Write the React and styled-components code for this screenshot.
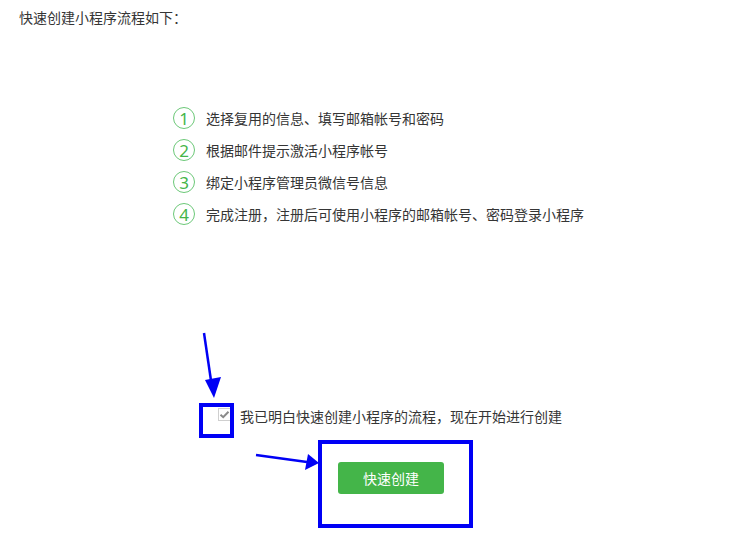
import React, { useState } from "react";
import styled, { createGlobalStyle } from "styled-components";

const steps = [
  "选择复用的信息、填写邮箱帐号和密码",
  "根据邮件提示激活小程序帐号",
  "绑定小程序管理员微信号信息",
  "完成注册，注册后可使用小程序的邮箱帐号、密码登录小程序",
];

const GlobalStyle = createGlobalStyle`
  html, body {
    margin: 0;
    padding: 0;
    background: #fff;
  }
  body {
    font-family: "Microsoft YaHei", "Noto Sans CJK SC", "Noto Sans", sans-serif;
    font-size: 14px;
    color: #353535;
  }
`;

const Page = styled.div`
  position: relative;
  width: 731px;
  height: 558px;
  box-sizing: border-box;
  padding: 7px 19px;
  overflow: hidden;
`;

const Heading = styled.div`
  line-height: 20px;
`;

const StepList = styled.ol`
  list-style: none;
  margin: 80px 0 0;
  padding: 0 0 0 154px;
  display: flex;
  flex-direction: column;
  gap: 10px;
`;

const StepRow = styled.li`
  display: flex;
  align-items: center;
  gap: 11px;
  height: 22px;
`;

const StepNum = styled.span`
  width: 22px;
  height: 22px;
  box-sizing: border-box;
  border: 1px solid #6cc878;
  border-radius: 50%;
  display: flex;
  align-items: center;
  justify-content: center;
  color: #44b549;
  font-family: "Microsoft YaHei", "Noto Sans", sans-serif;
  font-size: 17px;
  line-height: 1;
`;

const StepText = styled.span`
  line-height: 20px;
`;

const ConfirmRow = styled.label`
  display: flex;
  align-items: center;
  gap: 9px;
  height: 20px;
  margin: 180px 0 0 199px;
  cursor: pointer;
`;

const CheckBox = styled.span`
  width: 13px;
  height: 13px;
  box-sizing: border-box;
  border: 1px solid #cfcfcf;
  background: #fff;
  display: flex;
  align-items: center;
  justify-content: center;
  margin-top: -2px;
`;

const ConfirmText = styled.span`
  line-height: 20px;
  margin-top: 1px;
`;

const ButtonWrap = styled.div`
  margin: 37px 0 0 319px;
`;

const CreateButton = styled.button`
  width: 106px;
  height: 32px;
  border: none;
  border-radius: 3px;
  background: ${(p) => (p.disabled ? "#a8dcab" : "#44b549")};
  color: #fff;
  font-family: inherit;
  font-size: 14px;
  cursor: pointer;
  padding: 0;
`;

const Annotations = styled.svg`
  position: absolute;
  left: 0;
  top: 0;
  pointer-events: none;
`;

const App = () => {
  const [agreed, setAgreed] = useState(true);

  return (
    <>
      <GlobalStyle />
      <Page>
        <Heading>快速创建小程序流程如下：</Heading>
        <StepList>
          {steps.map((text, i) => (
            <StepRow key={i}>
              <StepNum>{i + 1}</StepNum>
              <StepText>{text}</StepText>
            </StepRow>
          ))}
        </StepList>
        <ConfirmRow onClick={() => setAgreed(!agreed)}>
          <CheckBox>
            {agreed && (
              <svg width="11" height="9" viewBox="0 0 11 9">
                <path d="M1.5 4.8 L4.2 7.2 L9.5 1.8" fill="none" stroke="#8a8a8a" strokeWidth="2" />
              </svg>
            )}
          </CheckBox>
          <ConfirmText>我已明白快速创建小程序的流程，现在开始进行创建</ConfirmText>
        </ConfirmRow>
        <ButtonWrap>
          <CreateButton disabled={!agreed}>快速创建</CreateButton>
        </ButtonWrap>
        <Annotations width="731" height="558" viewBox="0 0 731 558">
          <rect x="201" y="405" width="31" height="31" fill="none" stroke="#0000f5" strokeWidth="4" />
          <rect x="320" y="442" width="151" height="84" fill="none" stroke="#0000f5" strokeWidth="4" />
          <line x1="204" y1="333" x2="211.5" y2="384" stroke="#0000f5" strokeWidth="2.5" />
          <polygon points="205,380 221,377 214,398" fill="#0000f5" />
          <line x1="256" y1="455" x2="307" y2="462" stroke="#0000f5" strokeWidth="2.5" />
          <polygon points="308,454 305,470 319,463" fill="#0000f5" />
        </Annotations>
      </Page>
    </>
  );
};

export default App;
